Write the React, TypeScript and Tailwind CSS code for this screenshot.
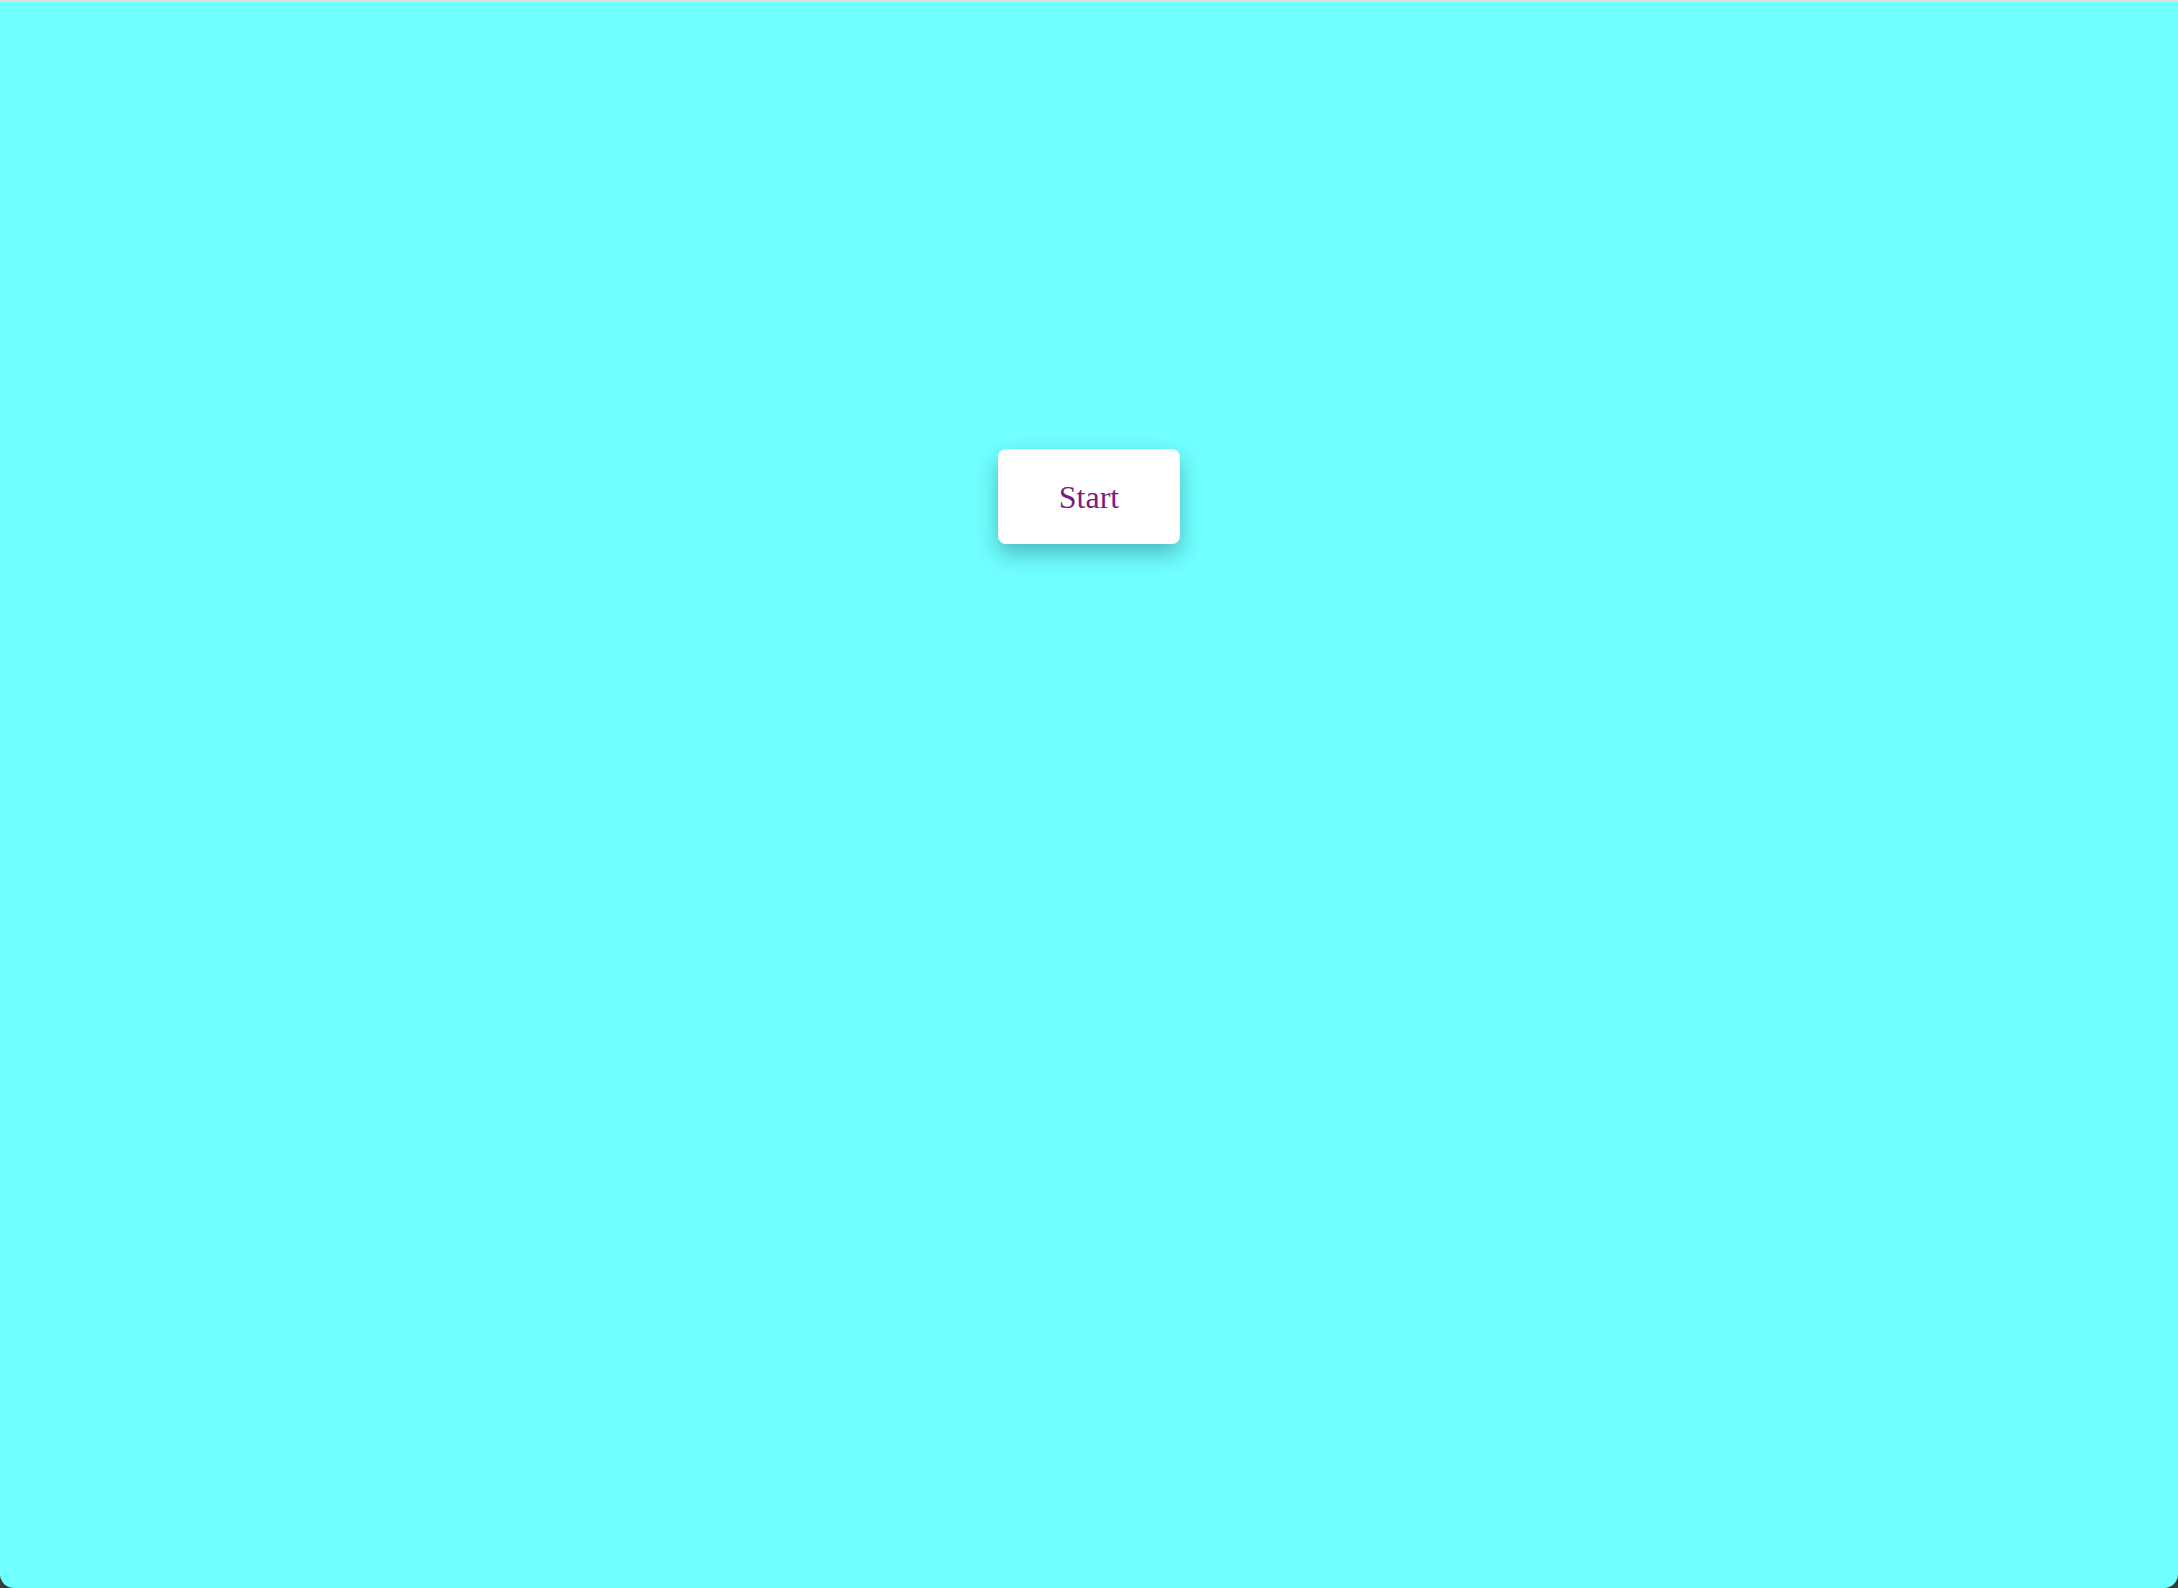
import React from "react";

export default function App() {
  return (
    <div className="w-[2178px] h-[1588px] bg-[#3a3a3a]">
      <div className="w-full h-full bg-[#71ffff] border-t-2 border-[#dcdcdc] rounded-b-[14px] flex flex-col items-center pt-[447px]">
        <button
          className="w-[182px] h-[95px] bg-white rounded-[8px] shadow-[0_10px_22px_rgba(0,60,70,0.35)] flex items-center justify-center text-[#7b1c80] text-[32px] leading-none"
          style={{ fontFamily: '"Liberation Serif", "DejaVu Serif", serif' }}
        >
          Start
        </button>
      </div>
    </div>
  );
}
